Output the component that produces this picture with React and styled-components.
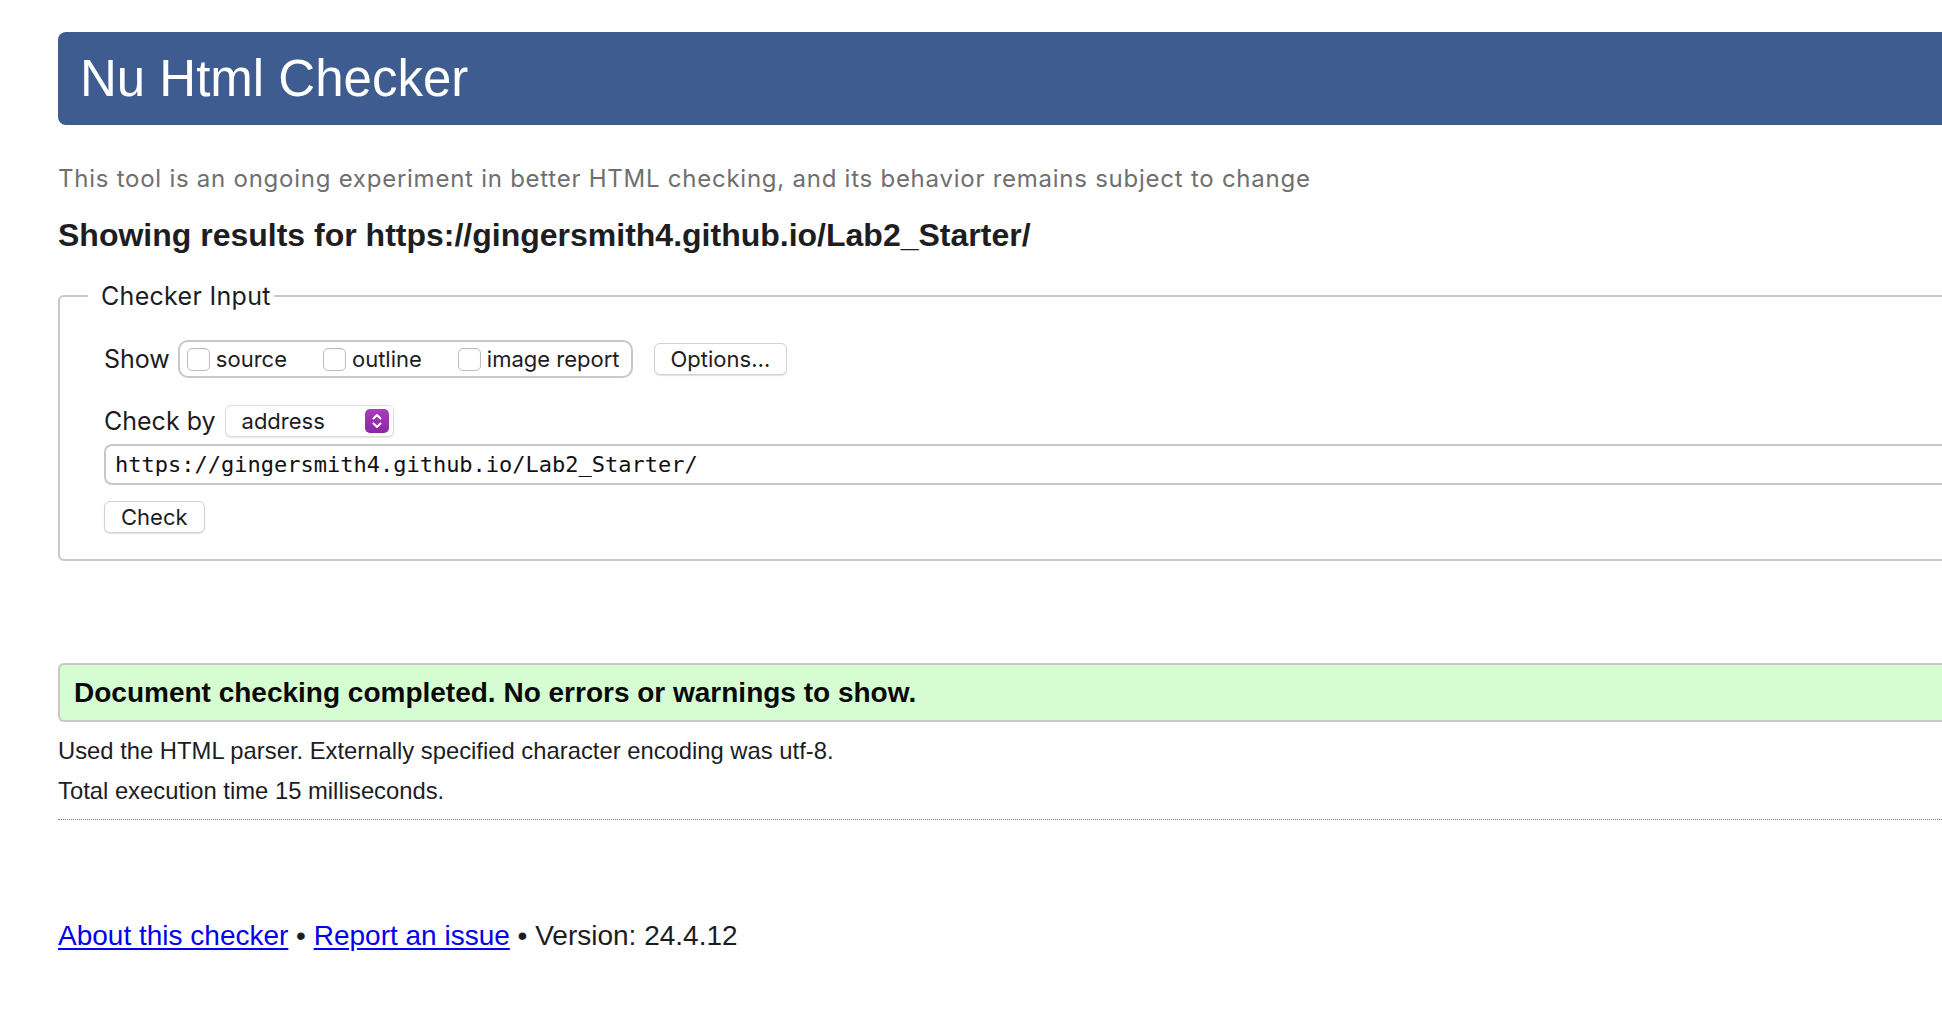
import styled, { createGlobalStyle } from "styled-components";

const GlobalStyle = createGlobalStyle`
  html, body {
    margin: 0;
    padding: 0;
    background: #fff;
    overflow: hidden;
  }
  body {
    font-family: "Liberation Sans", Arial, sans-serif;
    color: #1d1d1f;
  }
`;

const Page = styled.div`
  width: 2200px;
  padding: 32px 0 60px 58px;
  box-sizing: border-box;
`;

// blue title bar
const Header = styled.h1`
  margin: 0;
  height: 93px;
  line-height: 93px;
  padding-left: 22px;
  background: #3e5c8f;
  color: #fff;
  font-weight: normal;
  font-size: 51px;
  border-radius: 8px 0 0 8px;
`;

const Intro = styled.p`
  margin: 39px 0 0;
  line-height: 30px;
  font-family: Inter, "Noto Sans", sans-serif;
  font-size: 24px;
  letter-spacing: 0.75px;
  color: #6f6f6f;
`;

const ResultsFor = styled.h2`
  margin: 21px 0 0;
  line-height: 40px;
  font-size: 32px;
  font-weight: bold;
  color: #1e1e22;
`;

const Fieldset = styled.fieldset`
  margin: 26px 0 0;
  padding: 29px 0 26px 44px;
  border: 2px solid #c8c8c8;
  border-radius: 6px;
  font-family: Inter, "Noto Sans", sans-serif;
`;

const Legend = styled.legend`
  padding: 0 3px 0 13px;
  margin-left: -16px;
  line-height: 30px;
  font-size: 25px;
  letter-spacing: 0.3px;
  color: #1d1d1f;
`;

const Row = styled.div`
  display: flex;
  align-items: center;
  margin-top: ${p => p.$top || 0}px;
`;

const Label = styled.span`
  font-size: 25px;
  color: #1d1d1f;
  margin-right: ${p => p.$gap || 8}px;
`;

const OptionGroup = styled.div`
  display: flex;
  align-items: center;
  height: 38px;
  box-sizing: border-box;
  padding: 0 11px 0 7px;
  border: 2px solid #c8c8c8;
  border-radius: 10px;
`;

const CheckItem = styled.label`
  display: flex;
  align-items: center;
  font-size: 22px;
  color: #1d1d1f;
  margin-right: ${p => p.$last ? 0 : 36}px;
`;

const Box = styled.input`
  appearance: none;
  width: 23px;
  height: 23px;
  margin: 0 6px 0 0;
  border: 1px solid #bdbdbd;
  border-radius: 5px;
  background: #fff;
  box-shadow: inset 0 1px 1px rgba(0, 0, 0, 0.05);
`;

const Button = styled.button`
  height: 32px;
  padding: 0 ${p => p.$pad || 15}px;
  margin-left: ${p => p.$left || 0}px;
  background: #fff;
  border: 1px solid #d2d2d2;
  border-radius: 6px;
  box-shadow: 0 1px 1px rgba(0, 0, 0, 0.12);
  font-family: Inter, "Noto Sans", sans-serif;
  font-size: 22px;
  color: #1d1d1f;
`;

const Select = styled.div`
  display: flex;
  align-items: center;
  justify-content: space-between;
  width: 169px;
  height: 32px;
  box-sizing: border-box;
  padding: 0 4px 0 16px;
  background: #fff;
  border: 1px solid #dcdcdc;
  border-radius: 6px;
  box-shadow: 0 1px 1px rgba(0, 0, 0, 0.1);
  font-size: 22px;
  color: #1d1d1f;
`;

const Badge = styled.span`
  display: flex;
  align-items: center;
  justify-content: center;
  width: 24px;
  height: 24px;
  border-radius: 5px;
  background: linear-gradient(#a93dbd, #8a279f);
`;

const UrlInput = styled.input`
  display: block;
  width: 100%;
  height: 41px;
  margin-top: 7px;
  box-sizing: border-box;
  padding: 0 0 0 9px;
  border: 2px solid #c8c8c8;
  border-right: none;
  border-radius: 8px 0 0 8px;
  font-family: "DejaVu Sans Mono", monospace;
  font-size: 22px;
  color: #111;
  outline: none;
`;

const Success = styled.div`
  margin-top: 102px;
  height: 59px;
  box-sizing: border-box;
  padding-left: 14px;
  line-height: 55px;
  background: #d6fcd1;
  border: 2px solid #c8c8c8;
  border-right: none;
  border-radius: 6px 0 0 6px;
  font-size: 28px;
  font-weight: bold;
  color: #0a0a0a;
`;

const Info = styled.p`
  margin: ${p => p.$top}px 0 0;
  line-height: 36px;
  font-size: 23.8px;
  color: #1d1d1f;
`;

const Rule = styled.hr`
  margin: 10px 0 0;
  border: none;
  border-top: 1px dotted #7a7a7a;
`;

const Footer = styled.p`
  margin: 98px 0 0;
  line-height: 36px;
  font-size: 28px;
  color: #1d1d1f;

  a {
    color: #0000ee;
    text-decoration: underline;
    text-underline-offset: 3px;
  }
`;

function Chevrons() {
  return (
    <svg width="12" height="18" viewBox="0 0 12 18" fill="none">
      <path d="M2.5 6.5 L6 3 L9.5 6.5" stroke="#fff" strokeWidth="2" strokeLinecap="round" strokeLinejoin="round" />
      <path d="M2.5 11.5 L6 15 L9.5 11.5" stroke="#fff" strokeWidth="2" strokeLinecap="round" strokeLinejoin="round" />
    </svg>
  );
}

export default function App() {
  const url = "https://gingersmith4.github.io/Lab2_Starter/";
  return (
    <Page>
      <GlobalStyle />
      <Header>Nu Html Checker</Header>
      <Intro>
        This tool is an ongoing experiment in better HTML checking, and its behavior remains subject to change
      </Intro>
      <ResultsFor>Showing results for {url}</ResultsFor>

      <Fieldset>
        <Legend>Checker Input</Legend>
        <Row>
          <Label>Show</Label>
          <OptionGroup>
            <CheckItem><Box type="checkbox" />source</CheckItem>
            <CheckItem><Box type="checkbox" />outline</CheckItem>
            <CheckItem $last><Box type="checkbox" />image report</CheckItem>
          </OptionGroup>
          <Button $left={21} $pad={16}>Options…</Button>
        </Row>
        <Row $top={27}>
          <Label $gap={9}>Check by</Label>
          <Select>
            address
            <Badge><Chevrons /></Badge>
          </Select>
        </Row>
        <UrlInput type="text" defaultValue={url} readOnly />
        <Row $top={16}>
          <Button $pad={16}>Check</Button>
        </Row>
      </Fieldset>

      <Success>Document checking completed. No errors or warnings to show.</Success>
      <Info $top={11}>Used the HTML parser. Externally specified character encoding was utf-8.</Info>
      <Info $top={4}>Total execution time 15 milliseconds.</Info>
      <Rule />

      <Footer>
        <a href="#about">About this checker</a> • <a href="#issue">Report an issue</a> • Version: 24.4.12
      </Footer>
    </Page>
  );
}
